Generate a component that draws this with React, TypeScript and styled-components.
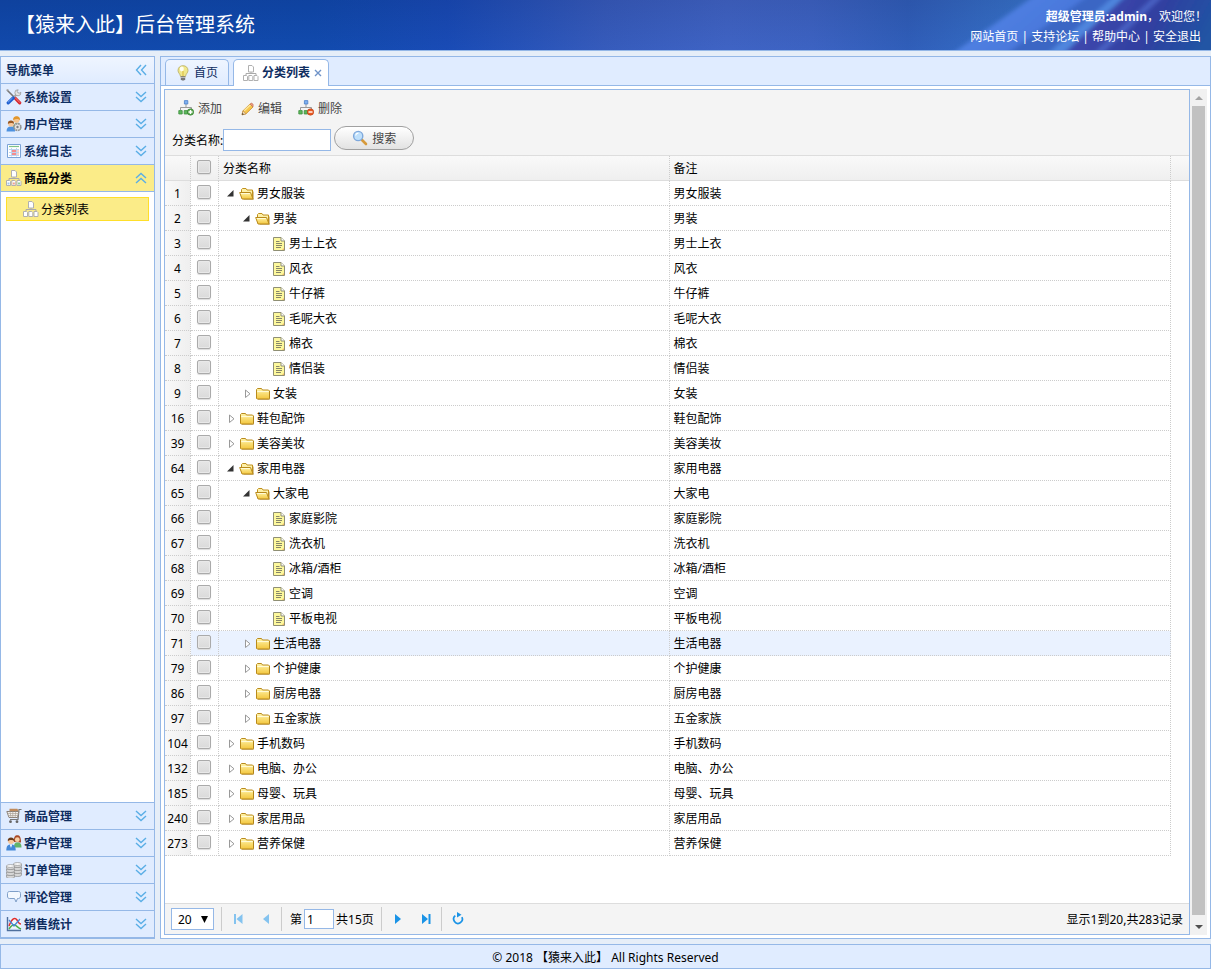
import React, { useState } from 'react';
import styled, { createGlobalStyle, css } from 'styled-components';

const GlobalStyle = createGlobalStyle`
  * { box-sizing: border-box; }
  html, body { margin: 0; padding: 0; }
  body, button, input, select {
    font-family: "Noto Sans", "Noto Sans CJK SC", sans-serif;
    font-size: 12px;
    line-height: 16px;
    color: #000;
  }
  button { margin: 0; padding: 0; border: 0; background: none; cursor: pointer; }
  svg { display: block; flex: none; }
`;

const BORDER = '#95b8e7';

const Page = styled.div`
  display: flex;
  flex-direction: column;
  gap: 5px;
  min-height: 100vh;
  background: #e6eef8;
`;

/* Text beside an icon sits slightly below the icon's centre line. */
const Caption = styled.span`
  padding-top: 2px;
`;

/* ---------- header ---------- */

const Banner = styled.header`
  position: relative;
  display: flex;
  justify-content: space-between;
  height: 51px;
  overflow: hidden;
  border-bottom: 1px solid ${BORDER};
  color: #fff;
  background:
    linear-gradient(180deg, rgba(0, 20, 90, 0.14), rgba(20, 80, 200, 0.1)),
    linear-gradient(90deg, #1149a9 0%, #114aab 26%, #1a4bb4 37%, #3a5dbb 50%, #4466c4 60%, #4165c2 67%, #3360b8 75%, #3a74c8 84%);
`;

const BannerArt = styled.svg`
  position: absolute;
  top: 0;
  right: 0;
`;

const BrandTitle = styled.h1`
  position: relative;
  margin: 0;
  padding: 11px 0 0 15px;
  font-size: 20px;
  line-height: 28px;
  font-weight: 400;
`;

const Account = styled.div`
  position: relative;
  display: flex;
  flex-direction: column;
  align-items: flex-end;
  padding: 7px 10px 0 0;
  line-height: 20px;
`;

const Welcome = styled.div`
  margin-right: -6px;
`;

const AccountLinks = styled.nav`
  a { color: #fff; text-decoration: none; }
`;

/* ---------- layout ---------- */

const Body = styled.div`
  display: flex;
  flex: 1;
  gap: 5px;
`;

const Sidebar = styled.aside`
  display: flex;
  flex-direction: column;
  width: 155px;
  flex: none;
  border: 1px solid ${BORDER};
  background: #fff;
`;

const SidebarTitle = styled.div`
  display: flex;
  align-items: center;
  justify-content: space-between;
  height: 27px;
  padding: 0 5px;
  border-bottom: 1px solid ${BORDER};
  background: linear-gradient(#eff5ff, #e0ecff);
  color: #0e2d5f;
  font-weight: 700;
`;

const SectionHeader = styled.button<{ $active?: boolean }>`
  display: flex;
  align-items: center;
  gap: 2px;
  width: 100%;
  height: 27px;
  flex: none;
  padding: 0 5px;
  border-bottom: 1px solid ${BORDER};
  background: ${p => (p.$active ? '#fbec88' : '#e0ecff')};
  color: ${p => (p.$active ? '#000' : '#0e2d5f')};
  font-weight: 700;
  text-align: left;
`;

const SectionLabel = styled(Caption)`
  flex: 1;
`;

const SectionBody = styled.div`
  flex: 1;
  padding: 5px;
  border-bottom: 1px solid ${BORDER};
`;

const SubItem = styled.a`
  display: flex;
  align-items: center;
  gap: 2px;
  height: 24px;
  padding-left: 16px;
  border: 1px solid #ffdf2a;
  background: #fbec88;
  color: #000;
  text-decoration: none;
`;

const Main = styled.main`
  display: flex;
  flex-direction: column;
  flex: 1;
  min-width: 0;
  border: 1px solid ${BORDER};
  background: #fff;
`;

const TabBar = styled.div`
  display: flex;
  align-items: flex-end;
  gap: 4px;
  height: 29px;
  padding: 0 4px;
  border-bottom: 1px solid ${BORDER};
  background: #e0ecff;
`;

const Tab = styled.div<{ $active?: boolean }>`
  display: flex;
  align-items: center;
  gap: 3px;
  height: 26px;
  padding: 0 10px 0 9px;
  border: 1px solid ${BORDER};
  border-bottom: 0;
  border-radius: 5px 5px 0 0;
  background: linear-gradient(#eff5ff, #e0ecff);
  ${p => p.$active && css`
    height: 27px;
    margin-bottom: -1px;
    padding: 0 5px 0 9px;
    background: #fff;
    font-weight: 700;
  `}
`;

const TabButton = styled.button`
  display: flex;
  align-items: center;
  gap: 3px;
  color: #0e2d5f;
  font-weight: inherit;
`;

const TabClose = styled.button`
  padding: 4px 1px;
`;

const TabPanel = styled.section`
  display: flex;
  flex: 1;
  padding: 3px;
`;

const GridPanel = styled.div`
  display: flex;
  flex-direction: column;
  flex: 1;
  min-width: 0;
  border: 1px solid ${BORDER};
`;

/* ---------- toolbar ---------- */

const Toolbar = styled.div`
  height: 66px;
  padding: 9px 7px 0;
  border-bottom: 1px solid #ddd;
  background: #f4f4f4;
`;

const ToolRow = styled.div`
  display: flex;
  gap: 16px;
  padding-left: 6px;
`;

const ToolButton = styled.button`
  display: flex;
  align-items: center;
  gap: 4px;
  color: #444;
`;

const SearchRow = styled.form`
  display: flex;
  align-items: flex-start;
  gap: 3px;
  margin-top: 9px;
`;

const SearchLabel = styled.label`
  display: flex;
  align-items: center;
  padding-top: 3px;
`;

const SearchInput = styled.input`
  width: 108px;
  height: 22px;
  padding: 0 4px;
  border: 1px solid ${BORDER};
  background: #fff;
  outline: none;
`;

const SearchButton = styled.button`
  display: flex;
  align-items: center;
  justify-content: center;
  gap: 4px;
  width: 80px;
  height: 24px;
  border: 1px solid #a0a0a0;
  border-radius: 12px;
  background: linear-gradient(#fff, #e2e2e2);
  color: #444;
`;

/* ---------- grid ---------- */

const GridArea = styled.div`
  flex: 1;
`;

const Grid = styled.table`
  width: 100%;
  table-layout: fixed;
  border-collapse: separate;
  border-spacing: 0;
`;

const HeadCell = styled.th`
  height: 25px;
  padding: 2px 4px 0;
  border-bottom: 1px solid #ddd;
  background: linear-gradient(#f9f9f9, #efefef);
  font-weight: 400;
  text-align: left;
  &:not(:last-child) { border-right: 1px dotted #ccc; }
`;

const Row = styled.tr<{ $hover?: boolean }>`
  background: ${p => (p.$hover ? '#eaf2ff' : '#fff')};
`;

const Cell = styled.td`
  height: 25px;
  padding: 2px 4px 0;
  border-right: 1px dotted #ccc;
  border-bottom: 1px dotted #ccc;
`;

const NumberCell = styled(Cell)`
  padding: 2px 0 0;
  background: linear-gradient(90deg, #f9f9f9, #efefef);
  text-align: center;
`;

const FillerCell = styled.td`
  padding: 0;
  background: #fff;
`;

const Check = styled.input`
  display: block;
  appearance: none;
  width: 14px;
  height: 14px;
  margin: 0 0 4px 2px;
  border: 1px solid #aaa;
  border-radius: 2px;
  background: linear-gradient(#e6e6e6, #dadada);
  box-shadow: inset 0 0 0 1px #e9e9e9, 0 1px 1px #ddd;
  &:checked { background: #8ab4e8; }
`;

const TreeNode = styled.div<{ $level: number }>`
  display: flex;
  align-items: center;
  padding-left: ${p => p.$level * 16}px;
`;

const Expander = styled.button`
  width: 16px;
  height: 16px;
`;

const NodeLabel = styled.span`
  padding-left: 2px;
`;

/* ---------- pager ---------- */

const Pager = styled.footer`
  display: flex;
  align-items: center;
  height: 31px;
  padding: 0 6px;
  border-top: 1px solid #ddd;
  background: #f4f4f4;
`;

const PageSize = styled.select`
  width: 43px;
  height: 22px;
  padding: 1px 6px 0;
  appearance: none;
  border: 1px solid ${BORDER};
  border-radius: 0;
  background: #fff;
`;

const SizeBox = styled.label`
  position: relative;
  svg { position: absolute; right: 6px; top: 8px; pointer-events: none; }
`;

const Divider = styled.span`
  width: 1px;
  height: 24px;
  margin: 0 8px 0 7px;
  background: #ccc;
`;

const PagerButton = styled.button`
  display: flex;
  align-items: center;
  justify-content: center;
  width: 16px;
  height: 24px;
  & + & { margin-left: 12px; }
`;

const PageField = styled.label`
  display: flex;
  align-items: center;
  gap: 2px;
`;

const PageInput = styled.input`
  width: 30px;
  height: 20px;
  padding: 1px 2px 0;
  border: 1px solid ${BORDER};
  background: #fff;
`;

const PagerInfo = styled(Caption)`
  margin-left: auto;
`;

/* ---------- scroll bar ---------- */

const ScrollTrack = styled.div`
  display: flex;
  flex-direction: column;
  align-items: center;
  width: 17px;
  background: #f1f1f1;
`;

const ScrollArrow = styled.span`
  display: flex;
  align-items: center;
  justify-content: center;
  height: 17px;
`;

const ScrollThumb = styled.span`
  flex: 1;
  width: 13px;
  margin-bottom: 3px;
  background: #c1c1c1;
`;

const PageFooter = styled.footer`
  height: 25px;
  padding-top: 5px;
  border: 1px solid ${BORDER};
  background: #e0ecff;
  text-align: center;
`;

/* ---------- icons ---------- */

const Svg = ({ children, size = 16 }: { children: React.ReactNode; size?: number }) => (
  <svg width={size} height={size} viewBox={`0 0 ${size} ${size}`} fill="none" aria-hidden="true">{children}</svg>
);

const Chevrons = ({ turn }: { turn: number }) => (
  <Svg>
    <g transform={`rotate(${turn} 8 8)`} stroke="#5aaee6" strokeWidth="1.4">
      <path d="M3 3l5 4.5L13 3M3 8l5 4.5L13 8" />
    </g>
  </Svg>
);

const SheetTreeIcon = ({ tinted }: { tinted?: boolean }) => (
  <Svg>
    <path d="M8 7v2M3 10V8.500h10V10" stroke="#aaa" />
    <path d="M5.500.5h3.500l1.500 1.500v5h-5z" fill="#fff" stroke="#b0b0b0" />
    <path d="M.5 10.500h3l1 1v4h-4zM5.800 10.500h3l1 1v4h-4zM11 10.500h3l1 1v4h-4z" fill="#fff" stroke="#b0b0b0" />
    {tinted && <>
      <path d="M1.500 12.500h2v2h-2z" fill="#9cc4ee" />
      <path d="M6.800 12.500h2v2h-2z" fill="#f2a08a" />
      <path d="M12 12.500h2v2h-2z" fill="#8ed09a" />
    </>}
  </Svg>
);

const ToolsIcon = () => (
  <Svg>
    <path d="M1 1l7 7" stroke="#777" strokeWidth="1.600" />
    <path d="M.6.600l2.200.8" stroke="#aaa" strokeWidth="1.200" />
    <path d="M9 9l4.700 4.800" stroke="#d8262c" strokeWidth="3.200" strokeLinecap="round" />
    <path d="M9 8.500l5 5.200" stroke="#f28080" strokeWidth="1" />
    <path d="M8 8l3.500-3.500" stroke="#a9a9a9" strokeWidth="2.200" />
    <path d="M14.800 3.200a3 3 0 1 1-2.600-2.400l-1 1.700.8 1.400 1.500.2z" fill="#e4e4e4" stroke="#999" strokeWidth=".8" />
    <path d="M2.200 13.800L7.200 9" stroke="#1f5fd0" strokeWidth="3.200" strokeLinecap="round" />
    <path d="M2 13.300L6.600 8.900" stroke="#76a8f4" strokeWidth="1" />
  </Svg>
);

const UserGearIcon = () => (
  <Svg>
    <path d="M6.500 14c0-5 1.500-7 4-7s4.500 2 4.500 7z" fill="#86b97c" />
    <circle cx="10.500" cy="3.700" r="3.100" fill="#f6c58e" />
    <path d="M7.200 4.200C6.800 1.400 8.500.200 10.500.200s3.900 1.200 3.400 4C12.500 2.500 9.500 2.500 7.200 4.200z" fill="#e2962c" />
    <path d="M.5 15.500c0-3.500 1.500-5 4.500-5s4 1.500 4 5z" fill="#4e92e0" />
    <circle cx="5" cy="7.700" r="2.900" fill="#f7c79b" />
    <path d="M1.900 8C1.600 5.500 3 4.400 5 4.400S8.300 5.500 8 8C6.700 6.600 3.500 6.600 1.900 8z" fill="#9a5a24" />
    <circle cx="11.500" cy="11" r="3.400" fill="#e4e4e4" stroke="#949494" strokeWidth="1.600" strokeDasharray="2 .67" />
    <circle cx="11.500" cy="11" r="1.200" fill="#808080" />
  </Svg>
);

const LogIcon = () => (
  <Svg>
    <path d="M1.500 1.500h13v13h-13z" fill="#fff" stroke="#7ba3d8" />
    <path d="M3 3.500h10" stroke="#7fc287" strokeWidth="1.200" />
    <path d="M3 6.500h10M3 9.500h10M3 12.500h10M5.500 5v8.500M10.500 5v8.500" stroke="#bdd3ee" />
    <path d="M6 7h4v2H6zM6 10h4v2H6z" fill="#f58c8c" />
    <path d="M11 10h2v2h-2zM11 7h2v2h-2z" fill="#fbd0c8" />
  </Svg>
);

const CartIcon = () => (
  <Svg>
    <path d="M15.500 1.500H13L12 11.500H4" stroke="#777" strokeWidth="1.200" />
    <path d="M3.500.8h8l1 3h-9z" fill="#c08b5c" />
    <path d="M.8 3.500h12l-1.300 6H3z" fill="#f4f2ef" stroke="#8a8178" />
    <path d="M1.500 5.500h11M2.300 7.500h9.700M4 3.500l1 6M6.800 3.500v6M9.700 3.500l-.6 6" stroke="#aaa297" strokeWidth=".7" />
    <circle cx="4.500" cy="13.700" r="1.400" fill="#666" />
    <circle cx="11" cy="13.700" r="1.400" fill="#666" />
  </Svg>
);

const CustomersIcon = () => (
  <Svg>
    <path d="M8 7C7.500 2 9 .3 11.300.3S15 2 15 7.500z" fill="#a84a28" />
    <path d="M8 12.500c0-4 1-5 3.500-5s4 1 4 5z" fill="#62b46a" />
    <circle cx="11.300" cy="4.700" r="2.400" fill="#f8cfa5" />
    <path d="M.3 15.500c0-4.500 1.500-6 4.700-6s4.700 1.500 4.700 6z" fill="#4388d8" />
    <circle cx="5" cy="6" r="3" fill="#f7c79b" />
    <path d="M1.800 6.300C1.400 3.600 3 2.500 5 2.500s3.600 1.100 3.200 3.800C7 4.500 3.600 4.500 1.800 6.300z" fill="#6a3c1c" />
    <path d="M3.800 9.500L5 13l1.200-3.500z" fill="#fff" />
  </Svg>
);

const CoinStack = ({ x, y, rows }: { x: number; y: number; rows: number }) => (
  <>
    {Array.from({ length: rows }, (_, i) => (
      <path key={i} d={`M${x} ${y + (rows - i) * 3}v2c0 2 8 2 8 0v-2z`} fill="#d6d6d6" stroke="#808080" strokeWidth=".6" />
    ))}
    <ellipse cx={x + 4} cy={y + 3} rx="4" ry="1.500" fill="#f6f6f6" stroke="#8c8c8c" strokeWidth=".6" />
  </>
);

const DatabaseIcon = () => (
  <Svg>
    <CoinStack x={7.500} y={-1} rows={4} />
    <CoinStack x={.5} y={1} rows={4} />
  </Svg>
);

const CommentIcon = () => (
  <Svg>
    <path d="M3.500 2.500h9c1.500 0 2 1 2 2v2.500c0 1.500-.8 2.500-2 2.500h-1L10 13 8.500 9.500h-5c-1.500 0-2-1-2-2.500V4.500c0-1 .5-2 2-2z" fill="#f3f8fe" stroke="#7f9fc8" />
  </Svg>
);

const ChartIcon = () => (
  <Svg>
    <path d="M3 2.500h12v10H3z" fill="#f3f6fb" />
    <path d="M1.500 1v13.500H15" stroke="#4e6f9e" strokeWidth="1.400" />
    <path d="M3 10C6 2 9 1 11 4s2 4 4 4" stroke="#e02c2c" strokeWidth="1.500" />
    <path d="M3 13c2-3 4-5 6-4s3 3 6 4" stroke="#4bb04b" strokeWidth="1.500" />
    <path d="M3 4l5 6 6-7" stroke="#4a86d8" strokeWidth="1.400" />
  </Svg>
);

const BulbIcon = () => (
  <Svg>
    <path d="M8 .7c3 0 5 2 5 4.800 0 2.500-2.300 3.300-2.500 6H5.500C5.300 8.800 3 8 3 5.500 3 2.700 5 .7 8 .7z" fill="#f0e88c" stroke="#b8ac60" strokeWidth=".8" />
    <ellipse cx="6.800" cy="4" rx="2" ry="2.400" fill="#fffef0" />
    <path d="M8 6v5" stroke="#d9b93c" />
    <path d="M5.800 11.300h4.400v3L9 15.600H7l-1.200-1.300z" fill="#777" />
    <path d="M5.800 12.500h4.400" stroke="#ccc" strokeWidth=".8" />
  </Svg>
);

const SitemapIcon = ({ remove }: { remove?: boolean }) => (
  <Svg>
    <path d="M8 4v3.500M2.500 10V7.500h11V10" stroke="#9a9a9a" />
    <path d="M6.400.6h3.400V4H6.400z" fill="#7fb0f0" stroke="#4a7fc8" strokeWidth=".8" />
    <path d="M.8 10.600h3.400V14H.8zM6.200 10.600h3.400V14H6.200z" fill="#5cb85c" stroke="#3c8f3c" strokeWidth=".8" />
    <circle cx="12.500" cy="12" r="3.200" fill={remove ? '#ea5a24' : '#5aa84e'} stroke={remove ? '#b83c10' : '#2f7a2c'} strokeWidth=".6" />
    <path d={remove ? 'M10.500 12h4' : 'M10.500 12h4M12.500 10v4'} stroke="#fff" strokeWidth="1.400" />
  </Svg>
);

const PencilIcon = () => (
  <Svg>
    <path d="M4 14.800l1-4L12 4l3 3-7 6.800z" fill="#f7c64c" stroke="#c98a2a" strokeWidth=".8" />
    <path d="M6.200 10.800L12.500 4.700" stroke="#fdeaa0" strokeWidth="1.200" />
    <path d="M12 4l1-.8c.8-.5 2.600 1.200 2.200 2.200L15 7z" fill="#ee9a80" stroke="#c07050" strokeWidth=".6" />
    <path d="M4 14.800l1-4 3 3z" fill="#f8dfb8" stroke="#b08040" strokeWidth=".6" />
    <path d="M4 14.800l.5-1.800 1.300 1.300z" fill="#333" />
  </Svg>
);

const SearchIcon = () => (
  <Svg>
    <path d="M10 10l4 4" stroke="#d69a3c" strokeWidth="2.600" strokeLinecap="round" />
    <circle cx="6.200" cy="6" r="4.600" fill="#bfe0fb" stroke="#7ea8dc" strokeWidth="1.400" />
    <path d="M3.600 5.500c.3-1.500 1.300-2.300 2.800-2.400" stroke="#fff" strokeWidth="1.200" />
  </Svg>
);

const FolderIcon = ({ open }: { open?: boolean }) => (
  <Svg>
    {open ? <>
      <path d="M2.500 11V3.500l1-1h3.500l1 1.500h5.500v8.500h-10z" fill="#fdf0a8" stroke="#c0901c" />
      <path d="M.7 6.500h10.800l2.500 6.500H3z" fill="url(#folderFill)" stroke="#b98a1c" />
      <path d="M1.800 7.500h9" stroke="#fffbd8" />
      <path d="M14.500 5.500v8h-10" stroke="#a87c18" strokeOpacity=".45" />
    </> : <>
      <path d="M1.500 12.500v-9l1-1h4l1 1.500h6l1 1v7.500l-1 .5h-11z" fill="url(#folderFill)" stroke="#b98a1c" />
      <path d="M2.200 5.500h11.600" stroke="#fffbd8" strokeWidth="1.200" />
      <path d="M3 13.500h11.500v-8" stroke="#a87c18" strokeOpacity=".45" />
    </>}
  </Svg>
);

const FileIcon = () => (
  <Svg>
    <path d="M2.500 1.500h7.500l3.500 3.500v9.500h-11z" fill="#fdf89c" stroke="#8f8f74" />
    <path d="M10 1.500V5h3.500" fill="#fff" stroke="#8f8f74" />
    <path d="M5 5.500h3.500M5 7.500h6M5 9.500h6M5 11.500h5" stroke="#86866a" />
    <path d="M11 14l2-2v2z" fill="#f2b86a" />
  </Svg>
);

const ExpanderArrow = ({ open }: { open?: boolean }) => (
  <Svg>
    {open
      ? <path d="M4 10.500h6.500V4z" fill="#333" />
      : <path d="M6.500 4v7.500L11 7.800z" fill="#fff" stroke="#999" />}
  </Svg>
);

const PagerFirst = () => <Svg><path d="M4 3h2v10H4zM12.500 3v10L6.500 8z" fill="#84c3ef" /></Svg>;
const PagerPrev = () => <Svg><path d="M11 3v10L5 8z" fill="#84c3ef" /></Svg>;
const PagerNext = () => <Svg><path d="M5 3v10l6-5z" fill="#1a93e6" /></Svg>;
const PagerLast = () => <Svg><path d="M10.500 3h2v10h-2zM4 3v10l6-5z" fill="#1a93e6" /></Svg>;
const PagerReload = () => (
  <Svg>
    <path d="M5.300 4.700a4.300 4.300 0 1 0 6.600 1.500" stroke="#1a93e6" strokeWidth="1.700" />
    <path d="M7 1l4.500 2.700L7 6.500z" fill="#1a93e6" />
  </Svg>
);

/* ---------- data ---------- */

type Kind = 'open' | 'closed' | 'leaf';
const rows: [number, string, number, Kind][] = [
  [1, '男女服装', 0, 'open'],
  [2, '男装', 1, 'open'],
  [3, '男士上衣', 2, 'leaf'],
  [4, '风衣', 2, 'leaf'],
  [5, '牛仔裤', 2, 'leaf'],
  [6, '毛呢大衣', 2, 'leaf'],
  [7, '棉衣', 2, 'leaf'],
  [8, '情侣装', 2, 'leaf'],
  [9, '女装', 1, 'closed'],
  [16, '鞋包配饰', 0, 'closed'],
  [39, '美容美妆', 0, 'closed'],
  [64, '家用电器', 0, 'open'],
  [65, '大家电', 1, 'open'],
  [66, '家庭影院', 2, 'leaf'],
  [67, '洗衣机', 2, 'leaf'],
  [68, '冰箱/酒柜', 2, 'leaf'],
  [69, '空调', 2, 'leaf'],
  [70, '平板电视', 2, 'leaf'],
  [71, '生活电器', 1, 'closed'],
  [79, '个护健康', 1, 'closed'],
  [86, '厨房电器', 1, 'closed'],
  [97, '五金家族', 1, 'closed'],
  [104, '手机数码', 0, 'closed'],
  [132, '电脑、办公', 0, 'closed'],
  [185, '母婴、玩具', 0, 'closed'],
  [240, '家居用品', 0, 'closed'],
  [273, '营养保健', 0, 'closed'],
];

const topSections = [
  { label: '系统设置', icon: <ToolsIcon /> },
  { label: '用户管理', icon: <UserGearIcon /> },
  { label: '系统日志', icon: <LogIcon /> },
];

const bottomSections = [
  { label: '商品管理', icon: <CartIcon /> },
  { label: '客户管理', icon: <CustomersIcon /> },
  { label: '订单管理', icon: <DatabaseIcon /> },
  { label: '评论管理', icon: <CommentIcon /> },
  { label: '销售统计', icon: <ChartIcon /> },
];

const Section = ({ label, icon, active }: { label: string; icon: React.ReactNode; active?: boolean }) => (
  <SectionHeader type="button" $active={active} aria-expanded={!!active}>
    {icon}
    <SectionLabel>{label}</SectionLabel>
    <Chevrons turn={active ? 180 : 0} />
  </SectionHeader>
);

export default function App() {
  const [keyword, setKeyword] = useState('');
  const [page, setPage] = useState('1');

  return (
    <Page>
      <GlobalStyle />
      <Banner>
        <BannerArt width="320" height="50" viewBox="0 0 320 50" aria-hidden="true">
          <defs>
            <linearGradient id="folderFill" x1="0" y1="0" x2="0" y2="1">
              <stop offset="0" stopColor="#fff4a8" />
              <stop offset="1" stopColor="#f3c63e" />
            </linearGradient>
            <linearGradient id="beam" gradientUnits="userSpaceOnUse" x1="100" y1="20" x2="150" y2="80">
              <stop offset="0" stopColor="#4f80e2" />
              <stop offset=".5" stopColor="#4a78dc" />
              <stop offset="1" stopColor="#3a68c6" />
            </linearGradient>
            <linearGradient id="violet" x1="0" y1="0" x2="1" y2=".2">
              <stop offset="0" stopColor="#4058b8" />
              <stop offset=".3" stopColor="#3d46ac" />
              <stop offset=".65" stopColor="#3040a0" />
              <stop offset="1" stopColor="#2054a4" />
            </linearGradient>
            <filter id="soft" x="-10%" y="-10%" width="120%" height="120%"><feGaussianBlur stdDeviation="2" /></filter>
          </defs>
          <g filter="url(#soft)">
            <path d="M58 56L146-6h180v62z" fill="url(#beam)" />
            <path d="M112 56L200-6h130v62z" fill="#3a66c4" />
            <path d="M166 56L238-6h95v62z" fill="url(#violet)" />
            <path d="M154 56L226-6h10L170 56z" fill="#4f86de" />
            <path d="M200 56L266-6h8L208 56z" fill="#4a62c4" />
          </g>
        </BannerArt>
        <BrandTitle>【猿来入此】后台管理系统</BrandTitle>
        <Account>
          <Welcome><b>超级管理员:admin</b>，欢迎您！</Welcome>
          <AccountLinks>
            <a href="#home">网站首页</a> | <a href="#forum">支持论坛</a> | <a href="#help">帮助中心</a> | <a href="#logout">安全退出</a>
          </AccountLinks>
        </Account>
      </Banner>

      <Body>
        <Sidebar>
          <SidebarTitle>
            <Caption>导航菜单</Caption>
            <button type="button" aria-label="收起菜单"><Chevrons turn={90} /></button>
          </SidebarTitle>
          {topSections.map(s => <Section key={s.label} {...s} />)}
          <Section label="商品分类" icon={<SheetTreeIcon tinted />} active />
          <SectionBody>
            <SubItem href="#categories"><SheetTreeIcon /><Caption>分类列表</Caption></SubItem>
          </SectionBody>
          {bottomSections.map(s => <Section key={s.label} {...s} />)}
        </Sidebar>

        <Main>
          <TabBar>
            <Tab>
              <TabButton type="button"><BulbIcon />首页</TabButton>
            </Tab>
            <Tab $active>
              <TabButton type="button"><SheetTreeIcon />分类列表</TabButton>
              <TabClose type="button" aria-label="关闭">
                <Svg size={8}><path d="M1 1l6 6M7 1L1 7" stroke="#6f93c8" strokeWidth="1.400" /></Svg>
              </TabClose>
            </Tab>
          </TabBar>

          <TabPanel>
            <GridPanel>
              <Toolbar>
                <ToolRow>
                  <ToolButton type="button"><SitemapIcon /><Caption>添加</Caption></ToolButton>
                  <ToolButton type="button"><PencilIcon /><Caption>编辑</Caption></ToolButton>
                  <ToolButton type="button"><SitemapIcon remove /><Caption>删除</Caption></ToolButton>
                </ToolRow>
                <SearchRow onSubmit={e => e.preventDefault()}>
                  <SearchLabel>
                    <Caption>分类名称:</Caption>
                    <SearchInput value={keyword} onChange={e => setKeyword(e.target.value)} />
                  </SearchLabel>
                  <SearchButton type="submit"><SearchIcon /><Caption>搜索</Caption></SearchButton>
                </SearchRow>
              </Toolbar>

              <GridArea>
                <Grid>
                  <colgroup>
                    <col style={{ width: 26 }} />
                    <col style={{ width: 28 }} />
                    <col style={{ width: '44%' }} />
                    <col />
                    <col style={{ width: 18 }} />
                  </colgroup>
                  <thead>
                    <tr>
                      <HeadCell />
                      <HeadCell><Check type="checkbox" aria-label="全选" /></HeadCell>
                      <HeadCell>分类名称</HeadCell>
                      <HeadCell>备注</HeadCell>
                      <HeadCell />
                    </tr>
                  </thead>
                  <tbody>
                    {rows.map(([id, name, level, kind]) => (
                      <Row key={id} $hover={id === 71}>
                        <NumberCell>{id}</NumberCell>
                        <Cell><Check type="checkbox" aria-label={name} /></Cell>
                        <Cell>
                          <TreeNode $level={kind === 'leaf' ? level + 1 : level}>
                            {kind !== 'leaf' && (
                              <Expander type="button" aria-label={name} aria-expanded={kind === 'open'}>
                                <ExpanderArrow open={kind === 'open'} />
                              </Expander>
                            )}
                            {kind === 'leaf' ? <FileIcon /> : <FolderIcon open={kind === 'open'} />}
                            <NodeLabel>{name}</NodeLabel>
                          </TreeNode>
                        </Cell>
                        <Cell>{name}</Cell>
                        <FillerCell />
                      </Row>
                    ))}
                  </tbody>
                </Grid>
              </GridArea>

              <Pager>
                <SizeBox>
                  <PageSize aria-label="每页记录数" defaultValue="20">
                    <option>10</option>
                    <option>20</option>
                    <option>50</option>
                  </PageSize>
                  <svg width="7" height="7" viewBox="0 0 7 7" aria-hidden="true"><path d="M0 0h7L3.500 7z" fill="#000" /></svg>
                </SizeBox>
                <Divider />
                <PagerButton type="button" aria-label="首页"><PagerFirst /></PagerButton>
                <PagerButton type="button" aria-label="上一页"><PagerPrev /></PagerButton>
                <Divider />
                <PageField>
                  <Caption>第</Caption>
                  <PageInput value={page} onChange={e => setPage(e.target.value)} />
                  <Caption>共15页</Caption>
                </PageField>
                <Divider />
                <PagerButton type="button" aria-label="下一页"><PagerNext /></PagerButton>
                <PagerButton type="button" aria-label="末页"><PagerLast /></PagerButton>
                <Divider />
                <PagerButton type="button" aria-label="刷新"><PagerReload /></PagerButton>
                <PagerInfo>显示1到20,共283记录</PagerInfo>
              </Pager>
            </GridPanel>

            <ScrollTrack aria-hidden="true">
              <ScrollArrow><Svg size={8}><path d="M0 6h8L4 2z" fill="#a3a3a3" /></Svg></ScrollArrow>
              <ScrollThumb />
              <ScrollArrow><Svg size={8}><path d="M0 2h8L4 6z" fill="#505050" /></Svg></ScrollArrow>
            </ScrollTrack>
          </TabPanel>
        </Main>
      </Body>

      <PageFooter>© 2018 【猿来入此】 All Rights Reserved</PageFooter>
    </Page>
  );
}
